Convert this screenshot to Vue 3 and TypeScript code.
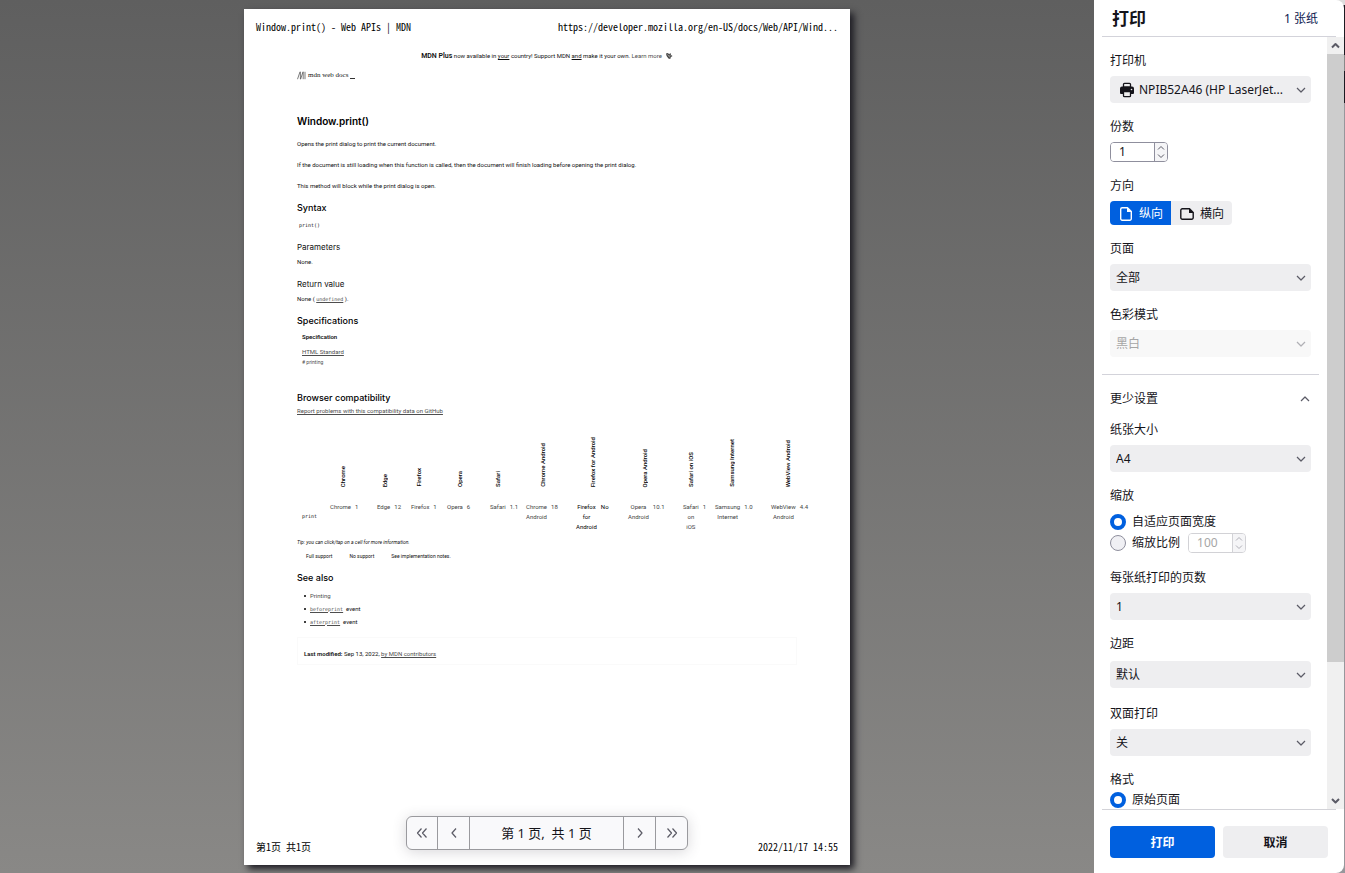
<script setup lang="ts">
import { ref } from 'vue'

interface Engine {
  name: string
  label: string[]
  version: string
  width: string
  indent: string
  strong?: boolean
}

const engines: Engine[] = [
  { name: 'Chrome', label: ['Chrome'], version: '1', width: 'w47', indent: 'mid' },
  { name: 'Edge', label: ['Edge'], version: '12', width: 'w34', indent: 'near' },
  { name: 'Firefox', label: ['Firefox'], version: '1', width: 'w36', indent: 'near' },
  { name: 'Opera', label: ['Opera'], version: '6', width: 'w43', indent: 'mid' },
  { name: 'Safari', label: ['Safari'], version: '1.1', width: 'w36', indent: 'near' },
  { name: 'Chrome Android', label: ['Chrome', 'Android'], version: '18', width: 'w50', indent: 'far' },
  { name: 'Firefox for Android', label: ['Firefox', 'for', 'Android'], version: 'No', width: 'w52', indent: 'far', strong: true },
  { name: 'Opera Android', label: ['Opera', 'Android'], version: '10.1', width: 'w55', indent: 'far' },
  { name: 'Safari on iOS', label: ['Safari', 'on', 'iOS'], version: '1', width: 'w32', indent: 'near' },
  { name: 'Samsung Internet', label: ['Samsung', 'Internet'], version: '1.0', width: 'w56', indent: 'far' },
  { name: 'WebView Android', label: ['WebView', 'Android'], version: '4.4', width: 'w40', indent: 'far' },
]

const copies = ref(1)
const scale = ref(100)
const orientation = ref<'portrait' | 'landscape'>('portrait')
const scaling = ref('fit')
const format = ref('original')
</script>

<template>
  <div class="window">
    <main class="preview">
      <article class="sheet">
        <header class="running">
          <span>Window.print() - Web APIs | MDN</span>
          <span>https://developer.mozilla.org/en-US/docs/Web/API/Wind...</span>
        </header>

        <div class="doc">
          <p class="banner">
            <b>MDN Plus</b> now available in <u>your</u> country! Support MDN <u>and</u> make it your own.
            <a href="#" class="plain">Learn more</a>&nbsp;
            <svg class="spark" viewBox="0 0 8 8" aria-hidden="true">
              <path d="M1 1.5 3 1l1 1.2L5.5 1 6 3l1.5 1L6 5 5.2 7 3.4 6.4 1.6 4z" fill="#444" />
              <path d="M2.5 2.5 5 5.5M5 2.8v1.5" stroke="#ddd" stroke-width=".6" />
            </svg>
          </p>
          <div class="logo">
            <svg viewBox="0 0 9 9" aria-hidden="true">
              <path d="M.5 8.2 3 .8M3.4 .8V8.2M3.6 8.2 6 .8M6.2 .8V8.2M8 .8V8.2" fill="none" stroke="#444" stroke-width=".7" />
            </svg>
            <span>mdn web docs</span><i class="cursor"></i>
          </div>

          <h1>Window.print()</h1>
          <p class="para">Opens the print dialog to print the current document.</p>
          <p class="para">If the document is still loading when this function is called, then the document will finish loading before opening the print dialog.</p>
          <p class="para">This method will block while the print dialog is open.</p>

          <h2>Syntax</h2>
          <p class="code-line"><code>print()</code></p>
          <h3>Parameters</h3>
          <p>None.</p>
          <h3>Return value</h3>
          <p>None ( <a href="#"><code>undefined</code></a> ).</p>

          <h2>Specifications</h2>
          <table class="spec">
            <thead><tr><th>Specification</th></tr></thead>
            <tbody><tr><td><a href="#">HTML Standard</a><br /><a href="#" class="plain small"># printing</a></td></tr></tbody>
          </table>

          <h2 class="compat-title">Browser compatibility</h2>
          <p class="report"><a href="#">Report problems with this compatibility data on GitHub</a></p>

          <table class="compat">
            <thead>
              <tr>
                <td class="w33"></td>
                <th v-for="e in engines" :key="e.name" :class="[e.width, e.indent]" scope="col">
                  <span class="upright">{{ e.name }}</span>
                </th>
              </tr>
            </thead>
            <tbody>
              <tr>
                <th class="feature" scope="row"><code>print</code></th>
                <td v-for="e in engines" :key="e.name" :class="{ strong: e.strong }">
                  <div class="support">
                    <span class="names"><span v-for="part in e.label" :key="part">{{ part }}</span></span>
                    <span>{{ e.version }}</span>
                  </div>
                </td>
              </tr>
            </tbody>
          </table>

          <p class="tip">Tip: you can click/tap on a cell for more information.</p>
          <p class="legend"><span>Full support</span><span>No support</span><span>See implementation notes.</span></p>

          <h2>See also</h2>
          <ul>
            <li><a href="#" class="plain">Printing</a></li>
            <li><a href="#"><code>beforeprint</code></a>&nbsp; event</li>
            <li><a href="#"><code>afterprint</code></a>&nbsp; event</li>
          </ul>

          <footer class="modified"><b>Last modified:</b> Sep 13, 2022, <a href="#">by MDN contributors</a></footer>
        </div>

        <footer class="running bottom">
          <span>第1页 共1页</span>
          <span>2022/11/17 14:55</span>
        </footer>
      </article>

      <nav class="pager" aria-label="页面导航">
        <button type="button" aria-label="首页"><svg viewBox="0 0 16 16"><path d="M7.5 3.500 3.500 8l4 4.500M12.500 3.500 8.500 8l4 4.500" /></svg></button>
        <button type="button" aria-label="上一页"><svg viewBox="0 0 16 16"><path d="M10 3.500 6 8l4 4.500" /></svg></button>
        <span class="count">第 1 页, &nbsp;共 1 页</span>
        <button type="button" aria-label="下一页"><svg viewBox="0 0 16 16"><path d="m6 3.500 4 4.500-4 4.500" /></svg></button>
        <button type="button" aria-label="末页"><svg viewBox="0 0 16 16"><path d="M3.500 3.500 7.500 8l-4 4.500M8.500 3.500l4 4.500-4 4.500" /></svg></button>
      </nav>
    </main>

    <aside class="edge">
      <form class="panel" @submit.prevent>
        <header class="head">
          <h1>打印</h1>
          <span>1 张纸</span>
        </header>

        <div class="body">
          <div class="settings">
            <section>
              <label for="printer">打印机</label>
              <div class="select printer">
                <svg class="lead" viewBox="0 0 16 16" aria-hidden="true">
                  <path d="M1 6.500A2 2 0 0 1 3 4.500h10a2 2 0 0 1 2 2V11a1 1 0 0 1-1 1H2a1 1 0 0 1-1-1z" fill="#15141a" />
                  <path d="M4.500 5V2.300a1 1 0 0 1 1-1h5a1 1 0 0 1 1 1V5z" fill="#eee" stroke="#15141a" stroke-width="1.300" />
                  <path d="M4.500 9.500h7v4.200a1 1 0 0 1-1 1h-5a1 1 0 0 1-1-1z" fill="#eee" stroke="#15141a" stroke-width="1.300" />
                  <circle cx="12.500" cy="7.500" r=".8" fill="#eee" />
                </svg>
                <select id="printer"><option>NPIB52A46 (HP LaserJet...</option></select>
                <svg class="arrow" viewBox="0 0 10 10"><path d="m1 3 4 4 4-4" /></svg>
              </div>
            </section>

            <section>
              <label for="copies">份数</label>
              <div class="number">
                <input id="copies" v-model="copies" type="number" min="1" />
                <span class="steps"><svg viewBox="0 0 12 18"><path d="m3 6.500 3-3 3 3M3 11.500l3 3 3-3" /></svg></span>
              </div>
            </section>

            <section>
              <span class="label">方向</span>
              <div class="segments">
                <button type="button" :class="{ on: orientation === 'portrait' }" @click="orientation = 'portrait'">
                  <svg viewBox="0 0 16 16"><path class="line" d="M9.500 1.800H4.200a1.500 1.500 0 0 0-1.500 1.500v9.400a1.500 1.500 0 0 0 1.500 1.500h7.600a1.500 1.500 0 0 0 1.500-1.500V5.500z" /><path class="fill" d="M9 1.500V6h4.800z" /></svg>
                  纵向
                </button>
                <button type="button" :class="{ on: orientation === 'landscape' }" @click="orientation = 'landscape'">
                  <svg viewBox="0 0 16 16"><path class="line" d="M10.500 2.700H3.300a1.500 1.500 0 0 0-1.500 1.500v7.600a1.500 1.500 0 0 0 1.500 1.500h9.400a1.500 1.500 0 0 0 1.500-1.500V6.500z" /><path class="fill" d="M10 2.200V7h4.800z" /></svg>
                  横向
                </button>
              </div>
            </section>

            <section>
              <label for="pages">页面</label>
              <div class="select">
                <select id="pages"><option>全部</option></select>
                <svg class="arrow" viewBox="0 0 10 10"><path d="m1 3 4 4 4-4" /></svg>
              </div>
            </section>

            <section>
              <label for="color">色彩模式</label>
              <div class="select off">
                <select id="color" disabled><option>黑白</option></select>
                <svg class="arrow" viewBox="0 0 10 10"><path d="m1 3 4 4 4-4" /></svg>
              </div>
            </section>

            <hr />

            <button type="button" class="more">
              更少设置
              <svg viewBox="0 0 10 10"><path d="m1 7 4-4 4 4" /></svg>
            </button>

            <section>
              <label for="paper">纸张大小</label>
              <div class="select">
                <select id="paper"><option>A4</option></select>
                <svg class="arrow" viewBox="0 0 10 10"><path d="m1 3 4 4 4-4" /></svg>
              </div>
            </section>

            <section>
              <span class="label">缩放</span>
              <div class="radios">
                <label class="radio"><input v-model="scaling" type="radio" name="scaling" value="fit" />自适应页面宽度</label>
                <div class="radio-row">
                  <label class="radio"><input v-model="scaling" type="radio" name="scaling" value="percent" />缩放比例</label>
                  <div class="number off">
                    <input v-model="scale" type="number" aria-label="缩放比例" disabled />
                    <span class="steps"><svg viewBox="0 0 12 18"><path d="m3 6.500 3-3 3 3M3 11.500l3 3 3-3" /></svg></span>
                  </div>
                </div>
              </div>
            </section>

            <section>
              <label for="per-sheet">每张纸打印的页数</label>
              <div class="select">
                <select id="per-sheet"><option>1</option></select>
                <svg class="arrow" viewBox="0 0 10 10"><path d="m1 3 4 4 4-4" /></svg>
              </div>
            </section>

            <section class="margins">
              <label for="margins">边距</label>
              <div class="select">
                <select id="margins"><option>默认</option></select>
                <svg class="arrow" viewBox="0 0 10 10"><path d="m1 3 4 4 4-4" /></svg>
              </div>
            </section>

            <section>
              <label for="duplex">双面打印</label>
              <div class="select">
                <select id="duplex"><option>关</option></select>
                <svg class="arrow" viewBox="0 0 10 10"><path d="m1 3 4 4 4-4" /></svg>
              </div>
            </section>

            <section class="format">
              <span class="label">格式</span>
              <label class="radio"><input v-model="format" type="radio" name="format" value="original" />原始页面</label>
            </section>
          </div>

          <div class="scrollbar" aria-hidden="true">
            <svg viewBox="0 0 17 17"><path d="m5 10.500 3.500-3.500 3.500 3.500" /></svg>
            <div class="thumb"></div>
            <div class="track"></div>
            <svg viewBox="0 0 17 17"><path d="m5 7 3.500 3.500L12 7" /></svg>
          </div>
        </div>

        <footer class="actions">
          <button type="submit" class="primary">打印</button>
          <button type="button">取消</button>
        </footer>
      </form>
    </aside>
  </div>
</template>

<style>
body {
  margin: 0;
}
</style>

<style scoped>
* {
  box-sizing: border-box;
}
h1, h2, h3, p, ul {
  margin: 0;
  padding: 0;
}
button, input, select {
  font: inherit;
  color: inherit;
}
.window {
  display: grid;
  grid-template-columns: minmax(0, 1fr) 251px;
  height: 100vh;
  overflow: hidden;
  color: #15141a;
  font: 12px/16px "Noto Sans", "Noto Sans CJK SC", sans-serif;
}

/* Preview */
.preview {
  position: relative;
  display: flex;
  justify-content: center;
  min-height: 0;
  padding: 9px 0 8px;
  background: linear-gradient(#5f5f5f, #898886);
}
.sheet {
  display: flex;
  flex-direction: column;
  height: 100%;
  min-width: 0;
  aspect-ratio: 606 / 856;
  padding: 10px 12px;
  background: #fff;
  box-shadow: 4px 4px 7px #1c1b22;
  color: #000;
}
.running {
  display: flex;
  justify-content: space-between;
  font: 10px/16px "Noto Sans CJK SC", sans-serif;
  font-feature-settings: "hwid";
  white-space: nowrap;
}
.bottom {
  margin-top: auto;
}
.doc {
  padding: 0 41px;
  font: 6px/10px Roboto, sans-serif;
  color: #111;
}
.doc a {
  color: #4e4e4e;
}
.doc a.plain {
  text-decoration: none;
}
.doc code {
  font-family: "DejaVu Sans Mono", monospace;
  font-size: 5px;
  line-height: 8px;
}
.banner {
  margin-top: 15px;
  line-height: 12px;
  text-align: center;
}
.banner b {
  font-size: 7px;
  font-weight: 600;
}
.spark {
  width: 8px;
  height: 8px;
  vertical-align: -2px;
}
.logo {
  display: flex;
  align-items: center;
  gap: 2px;
  height: 12px;
  margin-top: 7px;
  font: 7px/12px "Liberation Serif", serif;
}
.logo svg {
  width: 9px;
  height: 9px;
}
.cursor {
  align-self: flex-end;
  width: 5px;
  height: 1px;
  margin-bottom: 2px;
  background: #333;
}
.doc h1, .doc h2, .doc h3 {
  font-family: Inter, sans-serif;
}
.doc h1 {
  margin: 32px 0 10px;
  font-size: 10px;
  line-height: 16px;
  font-weight: 600;
  color: #000;
}
.para + .para {
  margin-top: 11px;
}
.doc h2 {
  margin: 11px 0 5px;
  font-size: 9px;
  line-height: 12px;
  font-weight: 500;
  color: #000;
}
.doc h3 {
  margin: 11px 0 4px;
  font-size: 8px;
  line-height: 12px;
  font-weight: 400;
}
.code-line {
  padding: 1px 0 0 2px;
}
.spec {
  border-collapse: collapse;
}
.spec th, .spec td {
  padding: 0 5px 5px;
  text-align: left;
}
.spec th {
  font-weight: 600;
}
.spec .small {
  font-size: 5px;
}
.doc .compat-title {
  margin: 20px 0 2px;
}
.compat {
  table-layout: fixed;
  width: 514px;
  margin-top: 4px;
  border-collapse: collapse;
}
.compat th, .compat td {
  padding: 0;
  text-align: left;
  vertical-align: top;
}
.compat thead th {
  height: 67px;
  vertical-align: bottom;
  font-weight: 500;
  color: #000;
}
.compat .near { padding-left: 3px; }
.compat .mid { padding-left: 8px; }
.compat .far { padding-left: 12px; }
.w32 { width: 32px; }
.w33 { width: 33px; }
.w34 { width: 34px; }
.w36 { width: 36px; }
.w40 { width: 40px; }
.w43 { width: 43px; }
.w47 { width: 47px; }
.w50 { width: 50px; }
.w52 { width: 52px; }
.w55 { width: 55px; }
.w56 { width: 56px; }
.upright {
  display: block;
  writing-mode: vertical-rl;
  transform: rotate(180deg);
  white-space: nowrap;
}
.compat tbody td {
  padding-top: 15px;
  color: #444;
}
.compat tbody .strong {
  color: #000;
}
.compat tbody .feature {
  padding: 24px 0 0 5px;
  font-weight: 400;
}
.support {
  display: flex;
  gap: 4px;
  min-height: 30px;
  white-space: nowrap;
}
.names {
  display: flex;
  flex-direction: column;
  align-items: center;
}
.tip {
  margin-top: 5px;
  font-size: 5px;
  font-style: italic;
}
.legend {
  display: flex;
  gap: 17px;
  margin-top: 4px;
  padding-left: 9px;
  font-size: 5px;
}
.doc ul {
  padding-left: 7px;
  list-style: none;
}
.doc li {
  display: flex;
  align-items: center;
  height: 13px;
}
.doc li::before {
  content: "";
  width: 2px;
  height: 2px;
  margin-right: 4px;
  border-radius: 1px;
  background: #000;
}
.modified {
  margin-top: 9px;
  padding: 11px 6px 5px;
  border: 1px solid #fafafa;
}
.modified b {
  font-weight: 600;
}

/* Page navigator */
.pager {
  position: absolute;
  bottom: 23px;
  left: 50%;
  display: flex;
  height: 34px;
  transform: translateX(-50%);
  border: 1px solid #9a9a9e;
  border-radius: 6px;
  background: #f9f9fb;
  box-shadow: 0 2px 14px rgba(58, 57, 68, 0.2);
}
.pager button {
  display: grid;
  place-items: center;
  width: 32px;
  padding: 0;
  border: 0;
  background: none;
}
.pager button:first-child {
  width: 30px;
}
.pager > * + * {
  border-left: 1px solid #9a9a9e !important;
}
.pager svg {
  width: 16px;
  height: 16px;
}
svg path {
  stroke-linejoin: round;
}
.pager path, .arrow path, .more path, .steps path, .scrollbar path {
  fill: none;
  stroke: #5b5b66;
  stroke-width: 1.2;
}
.count {
  width: 154px;
  font-size: 13px;
  line-height: 32px;
  text-align: center;
}

/* Settings panel */
.edge {
  min-height: 0;
  padding-right: 1px;
  background: linear-gradient(#ddd 5px, #1c1b22 5px 55px, #888 55px 71px, #1c1b22 71px 103px, #97979c 103px);
}
.panel {
  display: flex;
  flex-direction: column;
  height: 100%;
  overflow: hidden;
  border-radius: 0 8px 8px 0;
  background: #fff;
}
.head {
  display: flex;
  align-items: center;
  justify-content: space-between;
  height: 37px;
  margin: 0 8px;
  padding: 1px 18px 0 10px;
  border-bottom: 1px solid #d3d3da;
}
.head h1 {
  font-size: 17px;
  line-height: 24px;
}
.head span {
  color: #0c2050;
}
.body {
  display: grid;
  grid-template-columns: minmax(0, 1fr) 17px;
  flex: 1;
  min-height: 0;
}
.settings {
  display: flex;
  flex-direction: column;
  gap: 16px;
  min-height: 0;
  overflow: hidden;
  padding: 16px 16px 0;
}
section {
  display: flex;
  flex-direction: column;
  flex: none;
  gap: 7px;
}
.select {
  position: relative;
  color: #15141a;
}
.select select {
  display: block;
  width: 100%;
  height: 27px;
  padding: 1px 24px 0 6px;
  border: 0;
  border-radius: 4px;
  appearance: none;
  background: #eeeef0;
}
.select.printer select {
  padding-left: 29px;
  padding-right: 20px;
}
.select.off select {
  background: #f8f8f8;
  color: #a6a6a6;
  opacity: 1;
}
.select .arrow {
  position: absolute;
  top: 9px;
  right: 5px;
  width: 10px;
  height: 10px;
  pointer-events: none;
}
.off .arrow, .off .steps svg {
  opacity: 0.45;
}
.lead {
  position: absolute;
  top: 6px;
  left: 9px;
  width: 16px;
  height: 16px;
}
.number {
  display: flex;
  width: 58px;
  height: 20px;
  overflow: hidden;
  border: 1px solid #8f8f9d;
  border-radius: 4px;
}
.number input {
  flex: 1;
  min-width: 0;
  padding: 0 0 0 8px;
  border: 0;
  appearance: textfield;
  background: #fff;
  font-size: 12px;
}
.number input::-webkit-inner-spin-button {
  display: none;
}
.steps {
  width: 13px;
  border-left: 1px solid #8f8f9d;
  background: #f5f5f7;
}
.steps svg {
  display: block;
  width: 12px;
  height: 18px;
}
.steps path {
  stroke-width: 1;
}
.number.off, .off .steps {
  border-color: #d2d2d6;
}
.number.off input {
  color: #a6a6a6;
}
.segments {
  display: flex;
}
.segments button {
  display: flex;
  align-items: center;
  gap: 5px;
  width: 61px;
  height: 24px;
  padding: 1px 8px 0;
  border: 0;
  background: #eeeef0;
  white-space: nowrap;
}
.segments button:first-child {
  border-radius: 4px 0 0 4px;
}
.segments button:last-child {
  border-radius: 0 4px 4px 0;
}
.segments .on {
  background: #0060df;
  color: #fff;
}
.segments svg {
  flex: none;
  width: 16px;
  height: 16px;
}
.segments .line {
  fill: none;
  stroke: currentColor;
  stroke-width: 1.4;
}
.segments .fill {
  fill: currentColor;
}
hr {
  flex: none;
  width: auto;
  height: 1px;
  margin: 1px -8px -1px;
  border: 0;
  background: #d3d3da;
}
.more {
  display: flex;
  flex: none;
  align-items: center;
  justify-content: space-between;
  height: 16px;
  padding: 1px 1px 0 0;
  border: 0;
  background: none;
}
.more svg {
  width: 10px;
  height: 10px;
}
.radios {
  display: flex;
  flex-direction: column;
  gap: 3px;
  padding: 3px 0 1px;
}
.radio, .radio-row {
  display: flex;
  align-items: center;
  gap: 6px;
}
.radio-row {
  gap: 8px;
}
.radio input {
  width: 16px;
  height: 16px;
  margin: 0;
  border: 1px solid #8f8f9d;
  border-radius: 50%;
  appearance: none;
  background: #f0f0f4;
}
.radio input:checked {
  border: 4px solid #0060df;
  background: #fff;
}
.margins {
  gap: 9px;
  padding-bottom: 2px;
}
.format {
  gap: 4px;
}
.scrollbar {
  display: flex;
  flex-direction: column;
  background: #f0f0f0;
}
.scrollbar svg {
  flex: none;
  width: 17px;
  height: 17px;
}
.scrollbar path {
  stroke-width: 2;
}
.track {
  flex: 3;
}
.thumb {
  flex: 14;
  background: #cdcdcd;
}
.actions {
  display: grid;
  grid-template-columns: 1fr 1fr;
  gap: 8px;
  margin: 0 8px;
  padding: 16px 8px 15px;
  border-top: 1px solid #d3d3d8;
}
.actions button {
  height: 32px;
  padding-top: 2px;
  border: 0;
  border-radius: 4px;
  background: #eeeef0;
  font-weight: 700;
}
.actions .primary {
  background: #0060df;
  color: #fff;
}
</style>
